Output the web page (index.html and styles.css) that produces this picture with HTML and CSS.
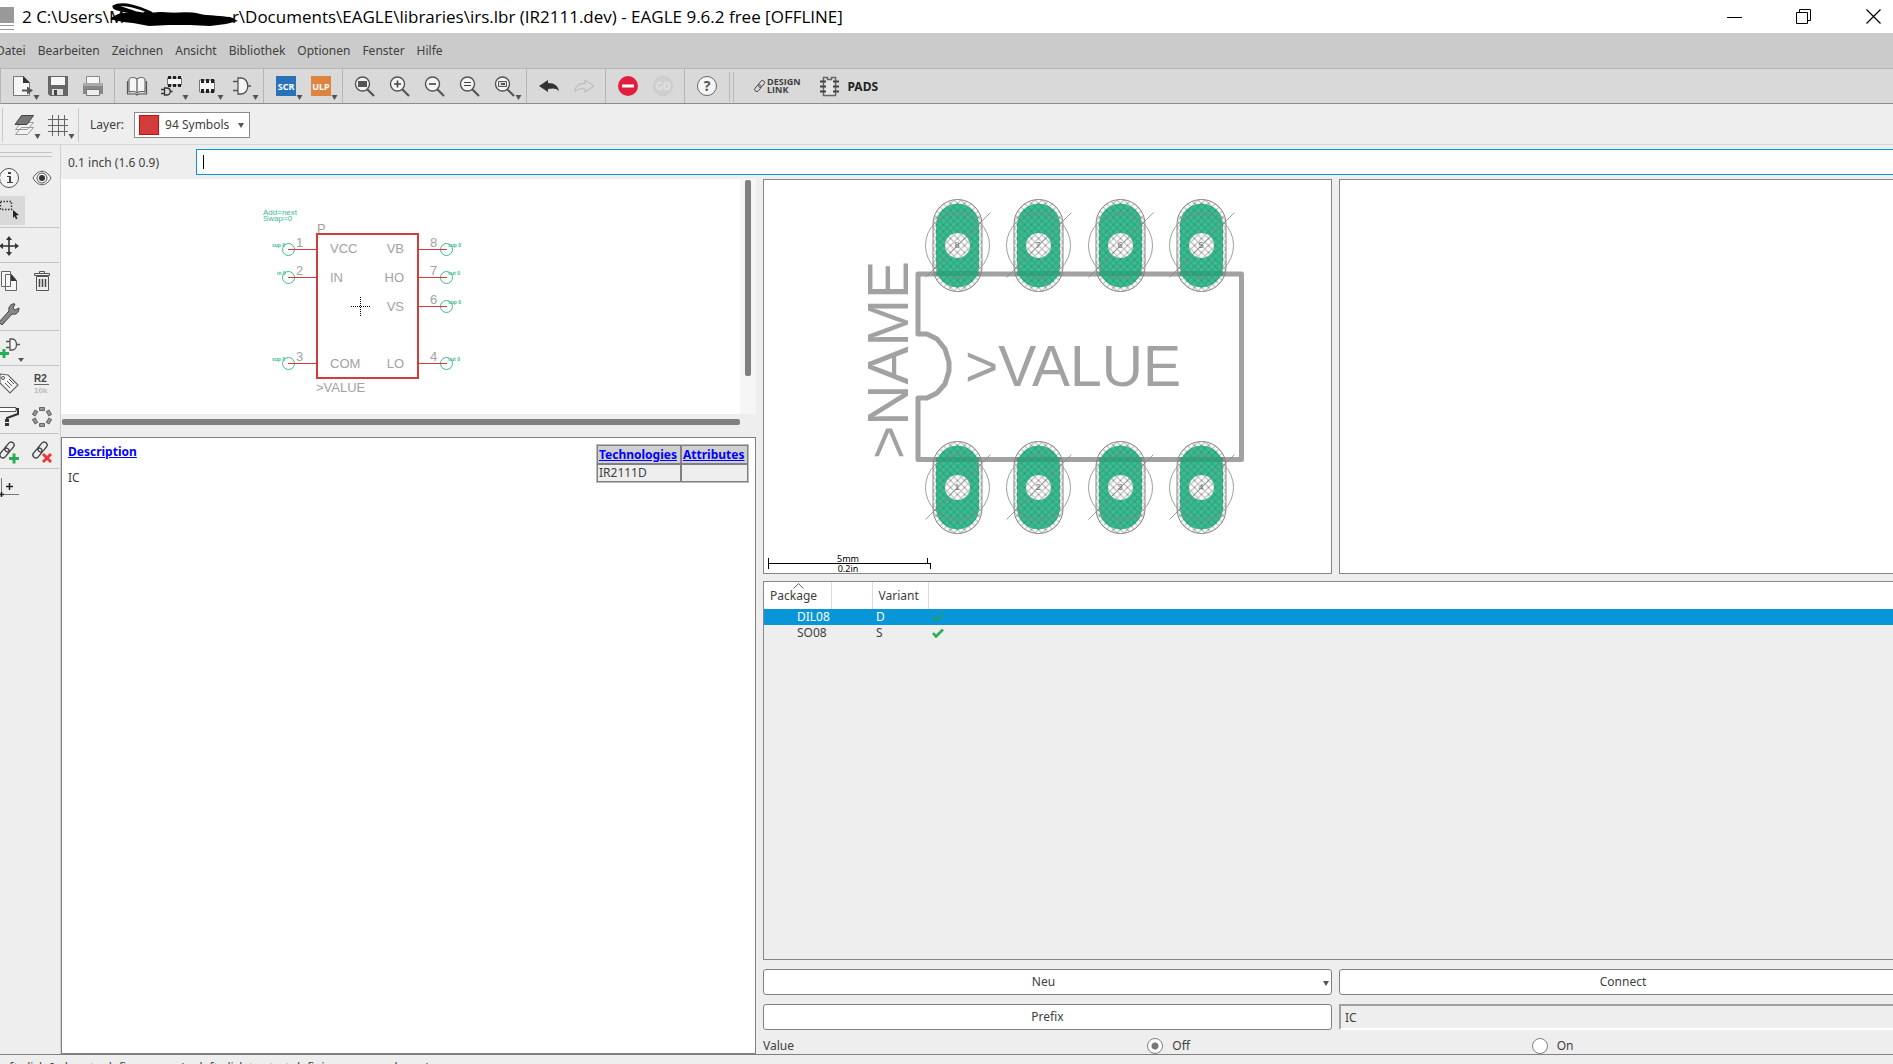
FILE: index.html
```html
<!DOCTYPE html>
<html lang="de">
<head>
<meta charset="utf-8">
<title>EAGLE 9.6.2 free</title>
<link rel="stylesheet" href="styles.css">
</head>
<body>
<svg class="defs" aria-hidden="true">
  <defs>
    <symbol id="lens" viewBox="0 0 35 34"><path d="M20 20l7 7" stroke="#555" stroke-width="2.200"/><circle cx="15.500" cy="15" r="7" fill="#f4f4f4" stroke="#555" stroke-width="1.400"/></symbol>
    <symbol id="drop" viewBox="0 0 35 34"><path d="M28.500 26h6l-3 5z" fill="#555"/></symbol>
    <symbol id="chain" viewBox="0 0 33 33"><g fill="none" stroke="#444" stroke-width="1.300"><rect x="-3" y="-5.500" width="6" height="11" rx="3" transform="translate(12.500 18) rotate(40)"/><rect x="-3" y="-5.500" width="6" height="11" rx="3" transform="translate(17.500 12) rotate(40)"/></g></symbol>
    <symbol id="check" viewBox="0 0 12 10"><path d="M1 5l3 3.500L11 1.500" fill="none" stroke="currentColor" stroke-width="2.600"/></symbol>
    <pattern id="mesh" width="7" height="7" patternUnits="userSpaceOnUse"><path d="M0 0l7 7M7 0L0 7" stroke="#777" stroke-width=".8"/></pattern>
    <pattern id="mesh-green" width="7" height="7" patternUnits="userSpaceOnUse"><path d="M0 0l7 7M7 0L0 7" stroke="#279b73" stroke-width="1"/></pattern>
    <g id="pad">
      <rect x="-24.500" y="-46" width="49" height="92" rx="24.500" fill="url(#mesh)" stroke="#858585"/>
      <rect x="-21.500" y="-42" width="43" height="84" rx="21.500" fill="#3dba91"/>
      <rect x="-21.500" y="-42" width="43" height="84" rx="21.500" fill="url(#mesh-green)"/>
      <circle r="12.500" fill="#fff"/><circle r="12.500" fill="url(#mesh)"/>
      <circle r="32" fill="none" stroke="#858585" stroke-width=".8"/>
      <path d="M-32 32L33-33" stroke="#858585" stroke-width=".8"/>
    </g>
  </defs>
</svg>
<div class="app">
  <header class="titlebar">
    <svg class="app-icon" width="14" height="28" viewBox="0 0 14 28"><path fill="#999" d="M0 4h14v16H0zM0 22h14v1H0zM0 26h14v1H0z"/></svg>
    <h1 class="title">2 C:\Users\<span class="redacted">M<svg class="scribble" width="130" height="26" viewBox="0 0 130 26"><path d="M4 5C14-1 34 7 40 10L32 13C20 8 6 4 5 5c0 3 22 5 33 8M3 17c9-6 14-5 22-4s18-2 30-1 24-2 34 1 20 1 36 5" fill="none" stroke="#000" stroke-width="3"/><path d="M1 17l10-5 22 2 18-4 31 2 24 2 15 1 8 4-12 3-16 2-20-1-21 0-20 1-16-3-10-1z"/></svg></span>r\Documents\EAGLE\libraries\irs.lbr (IR2111.dev) - EAGLE 9.6.2 free [OFFLINE]</h1>
    <button class="win" aria-label="Minimieren"><svg width="16" height="16"><path d="M0 8.500h15" stroke="#000"/></svg></button>
    <button class="win" aria-label="Wiederherstellen"><svg width="16" height="16"><path d="M.5 3.500h11v11H.5zM3.500 3.500v-3h11v11h-3" fill="none" stroke="#000"/></svg></button>
    <button class="win" aria-label="Schließen"><svg width="16" height="16"><path d="M.5.5l14 14M14.500.5l-14 14" stroke="#000" stroke-width="1.200"/></svg></button>
  </header>
  <nav class="menubar">
    <a href="#">Datei</a><a href="#">Bearbeiten</a><a href="#">Zeichnen</a><a href="#">Ansicht</a><a href="#">Bibliothek</a><a href="#">Optionen</a><a href="#">Fenster</a><a href="#">Hilfe</a>
  </nav>
  <div class="toolbar">
    <div class="group">
      <button aria-label="Neu"><svg viewBox="0 0 35 34"><path d="M8.500 7.500h10l6 6v13h-16z" fill="#f6f6f6" stroke="#777"/><path d="M18 7v7h7z" fill="#333"/><path d="M17 20.500h5v-3l6 4-6 4v-3h-5z" fill="#555"/><use href="#drop"/></svg></button>
      <button aria-label="Speichern"><svg viewBox="0 0 35 34"><path d="M8 7h20v20H10l-2-2z" fill="#666"/><path d="M11 8h14v8H11z" fill="#f6f6f6"/><path d="M12 20h11v6H12z" fill="#ddd"/><path d="M14 21h3v5h-3z" fill="#444"/></svg></button>
      <button aria-label="Drucken"><svg viewBox="0 0 35 34"><path d="M11.500 7.500h13v8h-13z" fill="#f6f6f6" stroke="#888"/><path d="M8 14h20v11H8z" fill="#888"/><path d="M8 14h20v3H8z" fill="#aaa"/><path d="M11.500 20.500h13v6h-13z" fill="#eee" stroke="#777"/></svg></button>
    </div>
    <div class="group">
      <button aria-label="Bibliothek"><svg viewBox="0 0 35 34"><path d="M18 10c-3-2-6-2-8 0v13c3-1 6-1 8 1 2-2 5-2 8-1V10c-2-2-5-2-8 0z" fill="#f6f6f6" stroke="#555"/><path d="M18 10v14M8.500 12v13h8l1.500 1 1.500-1h8V12" fill="none" stroke="#555" stroke-width="1.200"/></svg></button>
      <button aria-label="Bauteil"><svg viewBox="0 0 35 34"><path d="M13.500 9h14v7h-14z" fill="#f6f6f6" stroke="#777"/><path d="M14 7h3v3h-3zM19 7h3v3h-3zM24 7h3v3h-3zM14 15h3v3h-3zM19 15h3v3h-3zM24 15h3v3h-3z" fill="#222"/><path d="M10.500 19v7h2c5 0 5-7 0-7zM7 20.500h3M7 24.500h3M16 22.500h2.500" fill="none" stroke="#333" stroke-width="1.300"/><use href="#drop"/></svg></button>
      <button aria-label="Gehäuse"><svg viewBox="0 0 35 34"><path d="M10.500 11h15v12h-15z" fill="#f6f6f6" stroke="#777"/><path d="M12 10h3v4h-3zM17 10h3v4h-3zM22 10h3v4h-3zM12 20h3v4h-3zM17 20h3v4h-3zM22 20h3v4h-3z" fill="#222"/><use href="#drop"/></svg></button>
      <button aria-label="Symbol"><svg viewBox="0 0 35 34"><path d="M14 9v16h3c9 0 9-16 0-16z" fill="#f6f6f6" stroke="#555" stroke-width="1.300"/><path d="M9 12.500h5M9 21.500h5M23 17h4" stroke="#555" stroke-width="1.600"/><use href="#drop"/></svg></button>
    </div>
    <div class="group">
      <button aria-label="Skript"><svg viewBox="0 0 35 34"><path d="M8 7h20v20H8z" fill="#2a72b8"/><text x="18" y="21" class="tile">SCR</text><use href="#drop"/></svg></button>
      <button aria-label="ULP"><svg viewBox="0 0 35 34"><path d="M8 7h20v20H8z" fill="#de8340"/><text x="18" y="21" class="tile">ULP</text><use href="#drop"/></svg></button>
    </div>
    <div class="group">
      <button aria-label="Alles zeigen"><svg viewBox="0 0 35 34"><use href="#lens"/><path d="M11 12h9v6h-9z" fill="#555"/></svg></button>
      <button aria-label="Vergrößern"><svg viewBox="0 0 35 34"><use href="#lens"/><path d="M12 15h7M15.500 11.500v7" stroke="#444" stroke-width="1.600"/></svg></button>
      <button aria-label="Verkleinern"><svg viewBox="0 0 35 34"><use href="#lens"/><path d="M12 15h7" stroke="#444" stroke-width="1.600"/></svg></button>
      <button aria-label="Neu zeichnen"><svg viewBox="0 0 35 34"><use href="#lens"/><path d="M12 13.500h7M12 16.500h7" stroke="#444" stroke-width="1.200"/></svg></button>
      <button aria-label="Ausschnitt"><svg viewBox="0 0 35 34"><use href="#lens"/><path d="M11.500 12.500h8v5h-8z" fill="#ddd" stroke="#555"/><path d="M14 14h4v2h-4z" fill="#555"/><use href="#drop"/></svg></button>
    </div>
    <div class="group">
      <button aria-label="Rückgängig"><svg viewBox="0 0 35 34"><path d="M8 17l9-6v3c7 0 10 3 11 8-3-3-6-3-11-2v3z" fill="#333"/></svg></button>
      <button aria-label="Wiederholen" disabled><svg viewBox="0 0 35 34"><path d="M28 17l-9-6v3.500c-7 0-10 3-10 8 3-3 6-3 10-2.500v3z" fill="none" stroke="#b5b5b5"/></svg></button>
    </div>
    <div class="group">
      <button aria-label="Stopp"><svg viewBox="0 0 35 34"><circle cx="18" cy="17" r="10" fill="#df1f3d"/><path d="M12 15.500h12v3H12z" fill="#fff"/></svg></button>
      <button aria-label="Go" disabled><svg viewBox="0 0 35 34"><circle cx="18" cy="17" r="9.500" fill="#d0d0d0" stroke="#c9c9c9"/><text x="18" y="21" class="go">GO</text></svg></button>
    </div>
    <div class="group">
      <button aria-label="Hilfe"><svg viewBox="0 0 35 34"><circle cx="18" cy="17" r="9.500" fill="#f6f6f6" stroke="#666"/><text x="18" y="22" class="help">?</text></svg></button>
    </div>
    <div class="handle"></div>
    <button class="design"><svg width="14" height="14" viewBox="6 5 19 20"><use href="#chain" width="33" height="33"/></svg><span>DESIGN<br>LINK</span></button>
    <button class="pads"><svg width="20" height="22"><path d="M3.500 1.500h4v2h4v-2h4v18h-12z" fill="#e6e6e6" stroke="#666" stroke-width="1.500"/><path d="M0 5.500h6M0 10.500h6M0 15.500h6M13 5.500h6M13 10.500h6M13 15.500h6" stroke="#444" stroke-width="2"/></svg><span>PADS</span></button>
  </div>
  <div class="layerbar">
    <div class="layer-tools">
      <button aria-label="Layer"><svg viewBox="0 0 35 34"><path d="M9.500 26.500l6-7h12l-6 7zM9.500 21.500l6-7h12l-6 7z" fill="#f4f4f4" stroke="#999"/><path d="M9 16.500l6.500-9h12l-6.500 9z" fill="#777" stroke="#444"/><use href="#drop"/></svg></button>
      <button aria-label="Raster"><svg viewBox="0 0 35 34"><path d="M11.500 7v21M17.500 7v21M23.500 7v21M7 11.500h20M7 17.500h20M7 23.500h20" stroke="#666"/><use href="#drop" x="-1"/></svg></button>
    </div>
    <label for="layer">Layer:</label>
    <div class="layer-select"><span class="swatch"></span><select id="layer"><option>94 Symbols</option></select><span class="arrow"></span></div>
  </div>
  <div class="body">
    <aside class="sidebar">
      <div class="grip"></div>
      <div class="tools">
        <button aria-label="Info"><svg viewBox="0 0 33 33"><circle cx="17" cy="17" r="9.500" fill="#f6f6f6" stroke="#555"/><path d="M16 11h3v2h-3zM15 15h4v6h2v1h-6v-1h2v-5h-2z" fill="#444"/></svg></button>
        <button aria-label="Anzeigen"><svg viewBox="0 0 33 33"><path d="M8 17c5-9 13-9 18 0-5 9-13 9-18 0z" fill="#f6f6f6" stroke="#555"/><circle cx="17" cy="17" r="5" fill="none" stroke="#555"/><circle cx="17" cy="17" r="3" fill="#333"/></svg></button>
        <button class="active" aria-label="Gruppe"><svg viewBox="0 0 33 33"><path d="M8.500 7.500h11v8h-11z" fill="none" stroke="#333" stroke-width="1.400" stroke-dasharray="1.500 1.500"/><path d="M21 16l6 5-3 .5 1.500 3-1.500.7-1.400-3L21 24z" fill="#222"/></svg></button>
      </div>
      <div class="tools"><button aria-label="Verschieben"><svg viewBox="0 0 33 33"><path d="M10 17h14M17 10v14" stroke="#333" stroke-width="1.600"/><path d="M7 17l4-3v6zM27 17l-4-3v6zM17 7l-3 4h6zM17 27l-3-4h6z" fill="#333"/></svg></button></div>
      <div class="tools">
        <button aria-label="Kopieren"><svg viewBox="0 0 33 33"><path d="M9.500 7.500h9v15h-9zM13.500 10.500h6l5 6v10h-11z" fill="#f6f6f6" stroke="#666"/><path d="M19 10v7h6z" fill="#333"/></svg></button>
        <button aria-label="Löschen"><svg viewBox="0 0 33 33"><path d="M11.500 12.500h12v14h-12z" fill="#eee" stroke="#555"/><path d="M9.500 9.500h15v2h-15zM14.500 9V7.500h5V9" fill="#eee" stroke="#555"/><path d="M14.500 15v8M17.500 15v8M20.500 15v8" stroke="#444" stroke-width="1.500"/></svg></button>
        <button aria-label="Eigenschaften"><svg viewBox="0 0 33 33"><path d="M7 25l10-11c-1-4 2-8 6-7l-2 4 2 2 4-2c0 5-3 7-7 6L10 28z" fill="#888" stroke="#444"/></svg></button>
      </div>
      <div class="tools"><button aria-label="Hinzufügen"><svg viewBox="0 0 33 33"><path d="M18 7v11h2c6 0 6-11 0-11zM14 9.500h4M14 15.500h4M24 12.500h4" fill="#f6f6f6" stroke="#555" stroke-width="1.300"/><path d="M7 21.500h10M12 17v9" stroke="#27ae55" stroke-width="3"/><path d="M26 26h6l-3 4z" fill="#555"/></svg></button></div>
      <div class="tools">
        <button aria-label="Name"><svg viewBox="0 0 33 33"><path d="M8 7l8 1 10 10-8 8L8 16z" fill="#f6f6f6" stroke="#666" stroke-width="1.200"/><circle cx="11" cy="11" r="1.500" fill="none" stroke="#555"/><path d="M13 16l5 5M15 14l5 5M17 12l5 5" stroke="#555"/></svg></button>
        <button aria-label="Wert"><svg viewBox="0 0 33 33"><text x="9" y="15" class="r2">R2</text><path d="M9 17.500h15" stroke="#666"/><text x="9" y="26" class="tenk">10k</text></svg></button>
        <button aria-label="Ändern"><svg viewBox="0 0 33 33"><path d="M6 7.500h18v4H6z" fill="#fff" stroke="#555"/><path d="M24 9h2v5l-11 4v2" fill="none" stroke="#333" stroke-width="2"/><path d="M15 19v8" stroke="#333" stroke-width="4" stroke-dasharray="3 1"/></svg></button>
        <button aria-label="Ring"><svg viewBox="0 0 33 33"><g fill="#999" stroke="#666"><path id="seg" d="M14.500 7.500h5v3h-5z"/><use href="#seg" transform="rotate(60 17 17)"/><use href="#seg" transform="rotate(120 17 17)"/><use href="#seg" transform="rotate(180 17 17)"/><use href="#seg" transform="rotate(240 17 17)"/><use href="#seg" transform="rotate(300 17 17)"/></g></svg></button>
      </div>
      <div class="tools">
        <button aria-label="Verbinden"><svg viewBox="0 0 33 33"><use href="#chain" width="33" height="33"/><path d="M17 23.500h10M22 18.500v10" stroke="#27ae55" stroke-width="3"/></svg></button>
        <button aria-label="Trennen"><svg viewBox="0 0 33 33"><use href="#chain" width="33" height="33"/><path d="M18 19l8 8M26 19l-8 8" stroke="#e93a3a" stroke-width="3"/></svg></button>
      </div>
      <div class="tools last"><button aria-label="Ursprung"><svg viewBox="0 0 33 33"><path d="M9.500 8v19M7 24.500h20" stroke="#777"/><path d="M14 16.500h7M17.500 13v7M7 24.500h5M9.500 22v5" stroke="#222" stroke-width="1.500"/></svg></button></div>
    </aside>
    <main class="main">
      <div class="command"><label for="cmd">0.1 inch (1.6 0.9)</label><div class="cmd-box"><i class="caret"></i><input id="cmd" type="text"></div></div>
      <div class="panes">
        <section class="left">
          <div class="symbol-view">
            <div class="canvas">
              <svg width="678" height="235" viewBox="61 179 678 235">
                <g class="green"><text x="263" y="215" class="attr">Add=next</text><text x="263" y="221" class="attr">Swap=0</text>
                <g class="dir"><text x="272" y="247">sup 0</text><text x="277" y="275">in 0</text><text x="272" y="361">sup 0</text><text x="448" y="247">sup 0</text><text x="448" y="275">out 0</text><text x="448" y="304">sup 0</text><text x="448" y="361">out 0</text></g>
                <g fill="none" stroke="#3dba91"><circle cx="288.500" cy="249.500" r="6"/><circle cx="288.500" cy="277.500" r="6"/><circle cx="288.500" cy="363.500" r="6"/><circle cx="446.500" cy="249.500" r="6"/><circle cx="446.500" cy="277.500" r="6"/><circle cx="446.500" cy="306.500" r="6"/><circle cx="446.500" cy="363.500" r="6"/></g></g>
                <path d="M288 249.500h29M288 277.500h29M288 363.500h29M418 249.500h29M418 277.500h29M418 306.500h29M418 363.500h29" stroke="#d43c3c"/>
                <path d="M317 234h101v144H317z" fill="none" stroke="#d43c3c" stroke-width="2"/>
                <path d="M351 306.500h20M360.500 297v20" stroke="#000" stroke-dasharray="1 1"/>
                <g class="pin"><text x="317" y="233">P</text><text x="330" y="253">VCC</text><text x="330" y="282">IN</text><text x="330" y="368">COM</text><text x="316" y="392">&gt;VALUE</text>
                <text x="296" y="247">1</text><text x="296" y="275">2</text><text x="296" y="361">3</text><text x="430" y="247">8</text><text x="430" y="275">7</text><text x="430" y="304">6</text><text x="430" y="361">4</text>
                <g text-anchor="end"><text x="404" y="253">VB</text><text x="404" y="282">HO</text><text x="404" y="311">VS</text><text x="404" y="368">LO</text></g></g>
              </svg>
            </div>
            <div class="vscroll"><i></i></div>
            <div class="hscroll"><i></i></div>
          </div>
          <div class="description">
            <div><a href="#">Description</a><p>IC</p></div>
            <table class="tech"><thead><tr><th><a href="#">Technologies</a></th><th><a href="#">Attributes</a></th></tr></thead><tbody><tr><td>IR2111D</td><td></td></tr></tbody></table>
          </div>
        </section>
        <section class="right">
          <div class="pair previews">
            <div class="preview">
              <svg width="567" height="393" viewBox="764 180 567 393">
                <path d="M918 334V274h323.500v185.500H918V398h9l10-5 8-9 4-13v-9l-4-13-8-10-10-5z" fill="none" stroke="#a2a2a2" stroke-width="5" stroke-linejoin="round"/>
                <text class="big" x="965" y="386">&gt;VALUE</text>
                <text class="big" transform="translate(908 459) rotate(-90)">&gt;NAME</text>
                <use href="#pad" x="957.500" y="245.500"/><use href="#pad" x="1038.500" y="245.500"/><use href="#pad" x="1120.500" y="245.500"/><use href="#pad" x="1201.500" y="245.500"/>
                <use href="#pad" x="957.500" y="487.500"/><use href="#pad" x="1038.500" y="487.500"/><use href="#pad" x="1120.500" y="487.500"/><use href="#pad" x="1201.500" y="487.500"/>
                <path d="M936 273.500h43M1017 273.500h43M1099 273.500h43M1180 273.500h43M936 459.500h43M1017 459.500h43M1099 459.500h43M1180 459.500h43" stroke="#279b73" stroke-opacity=".6" stroke-width="5"/>
                <g class="padno"><text x="957" y="248">8</text><text x="1038" y="248">7</text><text x="1120" y="248">6</text><text x="1201" y="248">5</text><text x="957" y="490">1</text><text x="1038" y="490">2</text><text x="1120" y="490">3</text><text x="1201" y="490">4</text></g>
                <path d="M768.500 558v11M768 563.500h163M927.500 558v5M930.500 563v6" stroke="#000" fill="none"/>
                <g class="scale"><text x="848" y="562">5mm</text><text x="848" y="572">0.2in</text></g>
              </svg>
            </div>
            <div class="preview"></div>
          </div>
          <div class="list">
            <table class="packages">
              <thead><tr><th class="c1"><svg class="sort" width="12" height="6"><path d="M.5 5.500l5-5 5 5" fill="none" stroke="#666"/></svg>Package</th><th class="c2"></th><th class="c3">Variant</th><th class="c4"></th></tr></thead>
              <tbody><tr class="selected"><td>DIL08</td><td></td><td>D</td><td><svg width="12" height="10"><use href="#check"/></svg></td></tr><tr><td>SO08</td><td></td><td>S</td><td><svg width="12" height="10"><use href="#check"/></svg></td></tr></tbody>
            </table>
          </div>
          <div class="pair actions">
            <button class="btn drop">Neu<span class="arrow"></span></button><button class="btn">Connect</button>
            <button class="btn">Prefix</button><input class="prefix" type="text" value="IC" readonly aria-label="Prefix">
          </div>
          <div class="value"><span>Value</span><label><input type="radio" name="value" checked>Off</label><label><input type="radio" name="value">On</label></div>
        </section>
      </div>
    </main>
  </div>
  <footer class="status"><span>Left-click &amp; drag to define group (or left-click to start defining group polygon)</span></footer>
</div>
</body>
</html>
```
FILE: styles.css
```css
* { box-sizing: border-box; }
body {
  margin: 0;
  overflow: hidden;
  font: 12px/16px "Noto Sans", "Open Sans", sans-serif;
  color: #404040;
  background: #eee;
}
button, input, select { font: inherit; color: inherit; }
button { padding: 0; border: 0; background: none; }
svg { display: block; }
.defs { position: absolute; width: 0; height: 0; }

/* The window reaches slightly past the right screen edge. */
.app {
  display: flex;
  flex-direction: column;
  width: calc(100% + 14px);
  height: 100vh;
}

.titlebar { display: flex; align-items: center; height: 33px; background: #fff; flex: none; }
.app-icon { margin-right: 8px; }
.title { flex: 1; margin: 0; font: 17px/33px "Open Sans", "Noto Sans", sans-serif; color: #000; white-space: pre; }
.redacted { position: relative; display: inline-block; width: 123px; }
.scribble { position: absolute; left: 0; top: 2px; }
.win { display: flex; justify-content: center; width: 69px; }
.win:last-child { padding-left: 3px; }

.menubar { display: flex; gap: 12px; height: 36px; padding-top: 10px; margin-left: -4px; background: #cbcbcb; border-bottom: 1px solid #b5b5b5; flex: none; }
.menubar a { color: #404040; text-decoration: none; }

.toolbar { display: flex; height: 35px; background: #d9d9d9; border-left: 1px solid #b5b5b5; border-bottom: 1px solid #8c8c8c; flex: none; }
.group { display: flex; padding: 0 4px; border-right: 1px solid #b5b5b5; }
.group:nth-child(7) { border-right: 0; }
.group button, .group svg, .layer-tools button, .layer-tools svg { width: 35px; height: 34px; }
.tile { font: bold 9px "Noto Sans", sans-serif; fill: #fff; text-anchor: middle; }
.go { font: bold 10px "Noto Sans", sans-serif; fill: #e2e2e2; text-anchor: middle; }
.help { font: bold 14px "Noto Sans", sans-serif; fill: #555; text-anchor: middle; }
.handle { width: 5px; margin: 3px 19px 1px 1px; border: solid #b9b9b9; border-width: 0 1px; }
.design { display: flex; align-items: center; font: bold 9px/8px "Open Sans", sans-serif; text-align: left; }
.pads { display: flex; align-items: center; gap: 7px; margin-left: 20px; padding-top: 1px; font-weight: 700; color: #222; }

.layerbar { display: flex; align-items: center; height: 41px; padding-top: 2px; border-bottom: 1px solid #d6d6d6; flex: none; }
.layer-tools { display: flex; margin-left: 2px; height: 34px; width: 77px; padding-left: 3px; border: solid #c8c8c8; border-width: 0 1px; margin-right: 11px; }
.layer-select { position: relative; margin-left: 10px; }
.layer-select select { display: block; appearance: none; width: 116px; height: 26px; padding: 0 0 0 30px; border: 1px solid #8c8c8c; border-radius: 0; background: #fff; }
.swatch { position: absolute; left: 5px; top: 3px; width: 20px; height: 20px; background: #d43c3c; border: 1px solid #c01010; }
.arrow { position: absolute; right: 6px; top: 11px; border: solid transparent; border-width: 5px 3px 0; border-top-color: #555; }

.body { display: flex; flex: 1; min-height: 0; }
.sidebar { width: 61px; overflow: hidden; border-right: 1px solid #d0d0d0; flex: none; }
.grip { width: 52px; height: 5px; margin: 7px 0 3px; border: solid #c4c4c4; border-width: 1px 0; }
.tools { display: flex; flex-wrap: wrap; margin: 0 1px 0 -8px; padding: 1px 0 0 0; border-bottom: 1px solid #c4c4c4; }
.tools.last { border-bottom: 0; }
.tools button, .tools svg { width: 33px; height: 33px; }
.tools .active { background: #d9d9d9; box-shadow: inset 0 2px #eee, inset 0 -2px #eee; }
.r2 { font: bold 10px "Liberation Sans", sans-serif; fill: #444; }
.tenk { font: bold 8px "Liberation Sans", sans-serif; fill: #bbb; }

.main { display: flex; flex-direction: column; flex: 1; min-width: 0; }
.command { display: flex; align-items: center; height: 34px; padding: 4px 0 4px 7px; }
.command label { width: 128px; padding-top: 1px; }
.cmd-box { display: flex; align-items: center; flex: 1; height: 26px; padding-left: 6px; background: #fff; border: 1px solid #0996d8; }
.caret { width: 1px; height: 14px; background: #000; }
.cmd-box input { flex: 1; height: 22px; border: 0; outline: 0; background: none; }
.panes { display: grid; grid-template-columns: 695fr 1144fr; gap: 7px; flex: 1; min-height: 0; }

.left { display: flex; flex-direction: column; min-width: 0; }
.symbol-view { display: grid; grid-template-columns: 1fr 16px; grid-template-rows: 235px 23px; }
.canvas { background: #fff; overflow: hidden; }
.vscroll { padding: 1px 5px; background: #f6f6f6; }
.vscroll i { display: block; width: 6px; height: 84%; border-radius: 2px; background: #808080; }
.hscroll { padding: 5px 0 0 1px; }
.hscroll i { display: block; height: 6px; border-radius: 2px; background: #808080; }
.green text { fill: #3dba91; }
.attr { font: 8px "Liberation Sans", sans-serif; }
.dir { font: bold 5px "Liberation Sans", sans-serif; }
.pin { font: 13px "Liberation Sans", sans-serif; fill: #a2a2a2; }
.description { display: flex; justify-content: space-between; align-items: flex-start; flex: 1; padding: 6px; background: #fff; border: 1px solid #808080; }
.description a { font-weight: 700; color: #00f; }
.description p { margin: 10px 0; }
.tech { width: 153px; border: 1px solid #bbb; border-collapse: separate; border-spacing: 0; background: #eee; }
.tech th, .tech td { height: 18px; padding: 0 1px; border: 1px solid #808080; text-align: left; }
.tech th { height: 19px; padding-top: 1px; background: #d0d0d0; }

.right { display: flex; flex-direction: column; min-width: 0; }
.pair { display: grid; grid-template-columns: 569fr 568fr; gap: 7px; }
.preview { height: 395px; overflow: hidden; background: #fff; border: 1px solid #858585; }
.big { font: 57px "Liberation Sans", sans-serif; fill: #a2a2a2; }
.padno { font: 9px "Liberation Sans", sans-serif; fill: #777; text-anchor: middle; }
.scale { font: 9px "Noto Sans", sans-serif; fill: #000; text-anchor: middle; }
.list { flex: 1; margin: 7px 0 9px; border: 1px solid #828790; }
.packages { width: 100%; border-collapse: collapse; table-layout: fixed; }
.packages th { position: relative; height: 27px; padding: 1px 6px 0; font-weight: 400; text-align: left; background: #fff; border-right: 1px solid #ddd; }
.packages .c1 { width: 67px; }
.packages .c2 { width: 41px; }
.packages .c3 { width: 56px; }
.packages .c4 { border-right: 0; }
.sort { position: absolute; left: 29px; top: 1px; }
.packages td { height: 16px; padding: 0 4px; line-height: 16px; color: #404040; }
.packages td:first-child { padding-left: 33px; padding-right: 0; }
.packages td svg { color: #27ae55; }
.packages .selected td { background: #0996d8; color: #fff; }
.packages .selected svg { color: #1c9c7a; }
.btn { position: relative; height: 26px; background: #fff; border: 1px solid #808080; border-radius: 3px; }
.btn .arrow { right: 2px; }
.drop { padding-right: 8px; }
.actions { row-gap: 9px; }
.prefix { height: 26px; min-width: 0; padding: 0 4px; background: #eee; border: solid #a0a0a0; border-width: 2px 1px 2px 2px; border-bottom-color: #fff; outline: 0; }
.value { display: grid; grid-template-columns: repeat(3, 1fr); gap: 9px; align-items: center; height: 24px; padding-top: 8px; }
.value label { display: flex; align-items: center; gap: 9px; }
.value input { appearance: none; width: 16px; height: 16px; margin: 0; border: 1px solid #808080; border-radius: 50%; background: #fff; }
.value input:checked { background: radial-gradient(circle, #777 3px, #fff 4px); }

.status { height: 10px; overflow: hidden; border-top: 1px solid #808080; padding-top: 5px; flex: none; white-space: nowrap; }
.status span { display: block; margin-left: -4px; }
```
